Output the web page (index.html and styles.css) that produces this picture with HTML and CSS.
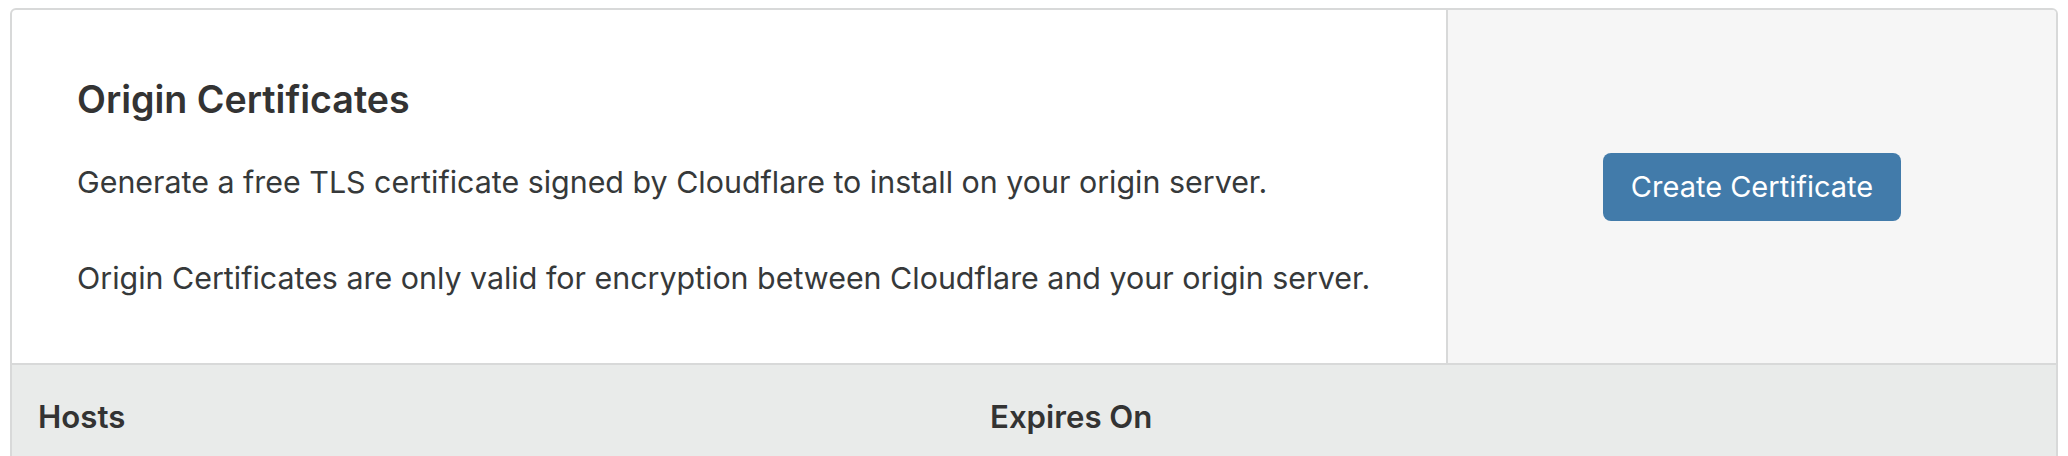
FILE: index.html
```html
<!DOCTYPE html>
<html lang="en">
<head>
<meta charset="utf-8">
<title>Origin Certificates</title>
<link rel="stylesheet" href="styles.css">
</head>
<body>
  <section class="card">
    <div class="top">
      <div class="intro">
        <h2 class="title">Origin Certificates</h2>
        <p class="desc">Generate a free TLS certificate signed by Cloudflare to install on your origin server.</p>
        <p class="desc">Origin Certificates are only valid for encryption between Cloudflare and your origin server.</p>
      </div>
      <div class="action">
        <button class="btn" type="button">Create Certificate</button>
      </div>
    </div>
    <div class="table-head">
      <div class="th">Hosts</div>
      <div class="th">Expires On</div>
    </div>
  </section>
</body>
</html>
```

FILE: styles.css
```css
html, body {
  margin: 0;
  padding: 0;
  background: #ffffff;
}

body {
  padding: 8px 10px 0;
  font-family: Inter, "Liberation Sans", sans-serif;
  color: #333333;
}

.card {
  border: 2px solid #d8d9d9;
  border-radius: 6px;
  overflow: hidden;
  background: #ffffff;
}

.top {
  display: grid;
  grid-template-columns: 1fr 610px;
  border-bottom: 2px solid #d8d9d9;
}

.intro {
  padding: 68px 40px 65px 65px;
}

.title {
  margin: 0 0 40px;
  font-size: 37.6px;
  line-height: 44px;
  font-weight: 600;
  color: #333333;
}

.desc {
  margin: 0;
  font-size: 30.4px;
  line-height: 40px;
  color: #36393a;
}

.desc + .desc {
  margin-top: 56px;
}

.action {
  border-left: 2px solid #d8d9d9;
  background: #f6f6f6;
  display: flex;
  align-items: center;
  justify-content: center;
}

.btn {
  font-family: Inter, "Liberation Sans", sans-serif;
  font-size: 29px;
  line-height: 40px;
  color: #ffffff;
  background: #427baa;
  border: none;
  border-radius: 8px;
  padding: 14px 28px;
  cursor: pointer;
}

.table-head {
  display: grid;
  grid-template-columns: 952px 1fr;
  background: #e9ebea;
  padding: 32px 0 46px;
}

.th {
  padding: 0 26px;
  font-size: 31.2px;
  line-height: 40px;
  font-weight: 600;
  color: #333333;
}
```
